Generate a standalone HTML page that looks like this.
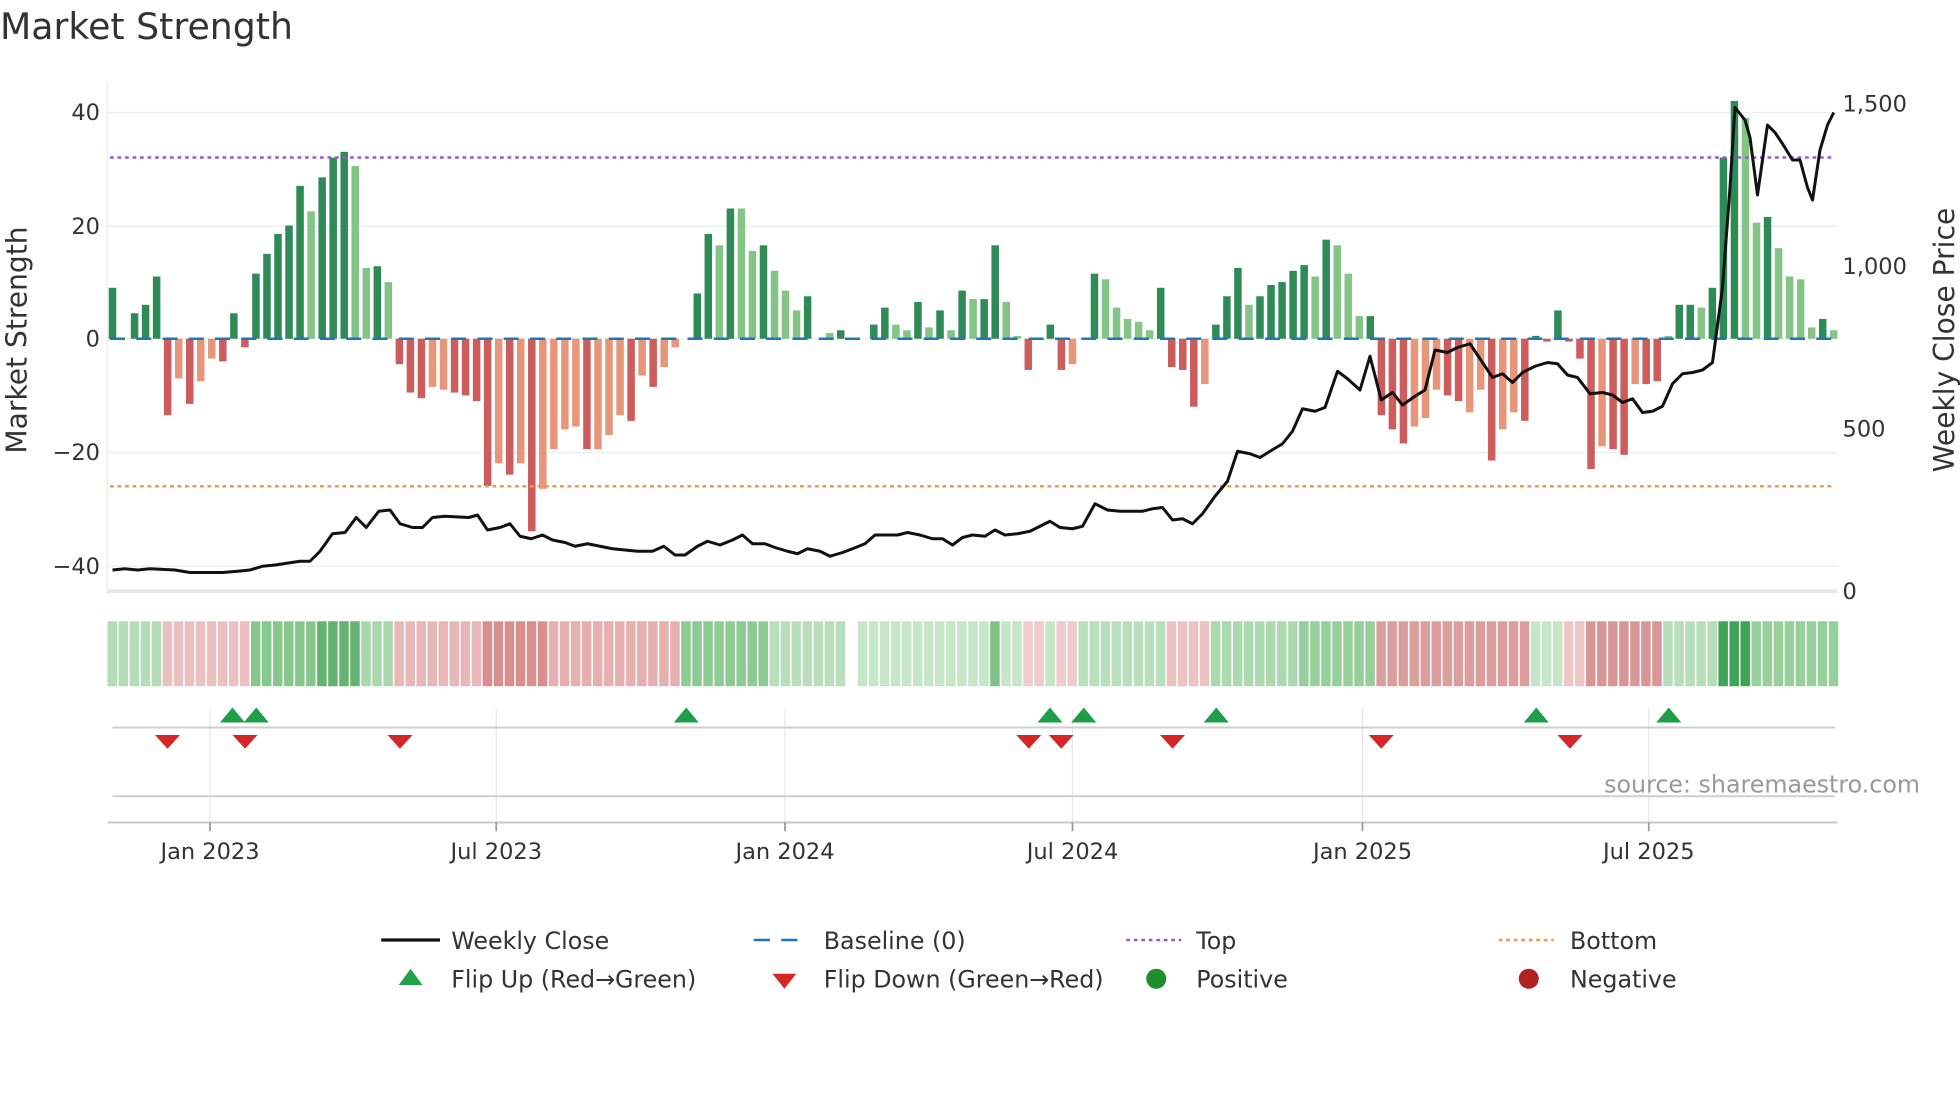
<!DOCTYPE html>
<html><head><meta charset="utf-8"><style>
html,body{margin:0;padding:0;background:#fff;}
svg{display:block;font-family:"DejaVu Sans","Liberation Sans",sans-serif;}
</style></head><body>
<svg id="s" width="1960" height="1102" viewBox="0 0 1568 881.6" xmlns="http://www.w3.org/2000/svg">
<text x="0" y="31" font-size="29" fill="#333">Market Strength</text>
<g id="grid" stroke="#ececf2" stroke-width="1">
<line x1="86" y1="90" x2="1470" y2="90"/><line x1="86" y1="181" x2="1470" y2="181"/><line x1="86" y1="271" x2="1470" y2="271"/><line x1="86" y1="362" x2="1470" y2="362"/><line x1="86" y1="453" x2="1470" y2="453"/>
<line x1="86" y1="65" x2="86" y2="476"/>
</g>
<line x1="86" y1="473" x2="1470" y2="473" stroke="#e6e6f0" stroke-width="3"/>
<g id="bars"></g>
<line x1="88" y1="271" x2="1468" y2="271" stroke="#1f77b4" stroke-width="2" stroke-dasharray="12,9"/>
<line x1="88" y1="126" x2="1468" y2="126" stroke="#9b59d0" stroke-width="2" stroke-dasharray="3,3"/>
<line x1="88" y1="389" x2="1468" y2="389" stroke="#ee9a4d" stroke-width="2" stroke-dasharray="3,3"/>
<polyline id="price" fill="none" stroke="#111" stroke-width="2.4" stroke-linejoin="round"/>
<g font-size="18" fill="#333" text-anchor="end">
<text x="80" y="96">40</text><text x="80" y="187">20</text><text x="80" y="277">0</text><text x="80" y="368">−20</text><text x="80" y="459">−40</text>
</g>
<g font-size="18" fill="#333">
<text x="1474" y="89">1,500</text><text x="1474" y="219">1,000</text><text x="1474" y="349">500</text><text x="1474" y="479">0</text>
</g>
<text transform="translate(21,272) rotate(-90)" font-size="22.5" fill="#333" text-anchor="middle">Market Strength</text>
<text transform="translate(1563,272) rotate(-90)" font-size="22.5" fill="#333" text-anchor="middle">Weekly Close Price</text>
<g id="heat"></g>
<g stroke="#e8e8e8" stroke-width="1">
<line x1="168" y1="567" x2="168" y2="658"/><line x1="397" y1="567" x2="397" y2="658"/><line x1="628" y1="567" x2="628" y2="658"/><line x1="858" y1="567" x2="858" y2="658"/><line x1="1090" y1="567" x2="1090" y2="658"/><line x1="1319" y1="567" x2="1319" y2="658"/>
</g>
<line x1="90" y1="582" x2="1468" y2="582" stroke="#cfcfcf" stroke-width="1.6"/>
<line x1="90" y1="637" x2="1468" y2="637" stroke="#cfcfcf" stroke-width="1.6"/>
<line x1="86" y1="658" x2="1470" y2="658" stroke="#c8c8c8" stroke-width="1.6"/>
<g stroke="#999" stroke-width="1.4">
<line x1="168" y1="658" x2="168" y2="665"/><line x1="397" y1="658" x2="397" y2="665"/><line x1="628" y1="658" x2="628" y2="665"/><line x1="858" y1="658" x2="858" y2="665"/><line x1="1090" y1="658" x2="1090" y2="665"/><line x1="1319" y1="658" x2="1319" y2="665"/>
</g>
<g id="flips"></g>
<text x="1536" y="634" font-size="19" fill="#999" text-anchor="end">source: sharemaestro.com</text>
<g font-size="18" fill="#333" text-anchor="middle">
<text x="168" y="687">Jan 2023</text><text x="397" y="687">Jul 2023</text><text x="628" y="687">Jan 2024</text><text x="858" y="687">Jul 2024</text><text x="1090" y="687">Jan 2025</text><text x="1319" y="687">Jul 2025</text>
</g>
<g font-size="19" fill="#333">
<line x1="305" y1="752" x2="352" y2="752" stroke="#111" stroke-width="2.6"/><text x="361" y="759">Weekly Close</text>
<line x1="603" y1="752" x2="647" y2="752" stroke="#1f77b4" stroke-width="2" stroke-dasharray="13,9"/><text x="659" y="759">Baseline (0)</text>
<line x1="901" y1="752" x2="945" y2="752" stroke="#9b59d0" stroke-width="2" stroke-dasharray="3,3"/><text x="957" y="759">Top</text>
<line x1="1199" y1="752" x2="1243" y2="752" stroke="#ee9a4d" stroke-width="2" stroke-dasharray="3,3"/><text x="1256" y="759">Bottom</text>
<polygon points="319,788 338,788 328.5,775" fill="#22a04a"/><text x="361" y="790">Flip Up (Red→Green)</text>
<polygon points="618,779 637,779 627.5,791" fill="#d62728"/><text x="659" y="790">Flip Down (Green→Red)</text>
<circle cx="925" cy="783" r="8" fill="#1f8f2e"/><text x="957" y="790">Positive</text>
<circle cx="1223" cy="783" r="8" fill="#b22222"/><text x="1256" y="790">Negative</text>
</g>
</svg>
<script>
var NS="http://www.w3.org/2000/svg";
var B=[[9,'d'],[0,'d'],[4.5,'d'],[6,'d'],[11,'d'],[-13.5,'r'],[-7,'o'],[-11.5,'r'],[-7.5,'o'],[-3.5,'o'],[-4,'r'],[4.5,'d'],[-1.5,'r'],[11.5,'d'],[15,'d'],[18.5,'d'],[20,'d'],[27,'d'],[22.5,'l'],[28.5,'d'],[32,'d'],[33,'d'],[30.5,'l'],[12.5,'l'],[12.8,'d'],[10,'l'],[-4.5,'r'],[-9.5,'r'],[-10.5,'r'],[-8.5,'o'],[-9,'o'],[-9.5,'r'],[-10,'r'],[-11,'r'],[-26,'r'],[-22,'o'],[-24,'r'],[-22,'o'],[-34,'r'],[-26.5,'o'],[-19.5,'o'],[-16,'o'],[-15.5,'o'],[-19.5,'r'],[-19.5,'o'],[-17,'o'],[-13.5,'o'],[-14.5,'r'],[-6.5,'o'],[-8.5,'r'],[-5,'o'],[-1.5,'o'],[0,'d'],[8,'d'],[18.5,'d'],[16.5,'l'],[23,'d'],[23,'l'],[15.5,'l'],[16.5,'d'],[12,'l'],[8.5,'l'],[5,'l'],[7.5,'d'],[0,'d'],[1,'l'],[1.5,'d'],[0,'d'],[0,'d'],[2.5,'d'],[5.5,'d'],[2.5,'l'],[1.5,'l'],[6.5,'d'],[2,'l'],[5,'d'],[1.5,'l'],[8.5,'d'],[7,'l'],[7,'d'],[16.5,'d'],[6.5,'l'],[0.5,'l'],[-5.5,'r'],[0,'d'],[2.5,'d'],[-5.5,'r'],[-4.5,'o'],[0,'d'],[11.5,'d'],[10.5,'l'],[5.5,'l'],[3.5,'l'],[3,'l'],[1.5,'l'],[9,'d'],[-5,'r'],[-5.5,'r'],[-12,'r'],[-8,'o'],[2.5,'d'],[7.5,'d'],[12.5,'d'],[6,'l'],[7.5,'d'],[9.5,'d'],[10,'d'],[12,'d'],[13,'d'],[11,'l'],[17.5,'d'],[16.5,'l'],[11.5,'l'],[4,'l'],[4,'d'],[-13.5,'r'],[-16,'r'],[-18.5,'r'],[-15.5,'o'],[-14,'o'],[-9,'o'],[-10,'r'],[-11,'r'],[-13,'o'],[-9,'o'],[-21.5,'r'],[-16,'o'],[-13,'o'],[-14.5,'r'],[0.5,'d'],[-0.5,'r'],[5,'d'],[-0.5,'r'],[-3.5,'r'],[-23,'r'],[-19,'o'],[-19.5,'r'],[-20.5,'r'],[-8,'o'],[-8,'r'],[-7.5,'r'],[0.5,'l'],[6,'d'],[6,'d'],[5.5,'l'],[9,'d'],[32,'d'],[42,'d'],[39,'l'],[20.5,'l'],[21.5,'d'],[16,'l'],[11,'l'],[10.5,'l'],[2,'l'],[3.5,'d'],[1.5,'l']];
var C={d:'#2e8a57',l:'#84c486',r:'#cd5c5c',o:'#e8967a'};
var g=document.getElementById('bars'),st=(1467-90)/(B.length-1);
B.forEach(function(b,i){var x=90+st*i-3,v=b[0];if(v===0)return;var y=271-(v>0?v:0)*4.53,h=Math.abs(v)*4.53;
var r=document.createElementNS(NS,'rect');r.setAttribute('x',x);r.setAttribute('y',y);r.setAttribute('width',6);r.setAttribute('height',h);r.setAttribute('fill',C[b[1]]);g.appendChild(r);});
var segs=[[86,130,'#b4dcb7'],[130,197,'#ebc0c0'],[197,201,'#c7e6c9'],[201,250,'#86c88c'],[250,290,'#62b46e'],[290,315,'#a8d8ab'],[315,387,'#e8b8b8'],[387,440,'#da8f8f'],[440,545,'#e6b0b0'],[545,620,'#8dcb92'],[620,677,'#b8dfba'],[686,792,'#c5e6c7'],[792,800,'#7fc486'],[800,815,'#c5e6c7'],[815,836,'#f0cccc'],[836,846,'#c5e6c7'],[846,862,'#f0cccc'],[862,932,'#b9e0bc'],[932,968,'#edc2c2'],[968,1040,'#aadaad'],[1040,1100,'#95cf99'],[1100,1225,'#dc9d9d'],[1225,1252,'#c5e6c7'],[1252,1268,'#efc6c6'],[1268,1330,'#d99696'],[1330,1376,'#b6deb9'],[1376,1400,'#3ea556'],[1400,1471,'#98d09c']];
var h=document.getElementById('heat');
for(var i=0;i<158;i++){var x=86+i*st,cx=x+4.4,col=null;segs.forEach(function(s){if(cx>=s[0]&&cx<s[1])col=s[2];});if(!col)continue;
var r=document.createElementNS(NS,'rect');r.setAttribute('x',x);r.setAttribute('y',497);r.setAttribute('width',Math.min(7.6,1471-x));r.setAttribute('height',52);r.setAttribute('fill',col);h.appendChild(r);}
var f=document.getElementById('flips');
[186,205,549,840,867,973,1229,1335].forEach(function(x){var p=document.createElementNS(NS,'polygon');p.setAttribute('points',(x-10)+',578 '+(x+10)+',578 '+x+',566');p.setAttribute('fill','#1f9e48');f.appendChild(p);});
[134,196,320,823,849,938,1105,1256].forEach(function(x){var p=document.createElementNS(NS,'polygon');p.setAttribute('points',(x-10)+',588 '+(x+10)+',588 '+x+',599');p.setAttribute('fill','#d62728');f.appendChild(p);});
document.getElementById('price').setAttribute('points',"90,456 100,455 110,456 120,455 140,456 152,458 178,458 190,457 200,456 210,453 220,452 240,449 248,449 256,441 266,427 276,426 285,414 293,422 303,409 312,408 320,419 330,422 338,422 346,414 356,413 375,414 382,412 390,424 400,422 408,419 416,429 425,431 434,428 442,432 452,434 460,437 470,435 480,437 490,439 500,440 510,441 522,441 531,437 540,444 548,444 558,437 566,433 576,436 586,432 594,428 602,435 612,435 620,438 630,441 638,443 646,439 656,441 664,445 674,442 682,439 692,435 700,428 710,428 718,428 726,426 736,428 746,431 754,431 762,436 770,430 778,428 788,429 796,424 804,428 814,427 824,425 832,421 840,417 848,422 858,423 866,421 876,403 886,408 896,409 906,409 914,409 922,407 930,406 938,416 946,415 954,419 962,411 972,397 982,385 990,361 1000,363 1008,366 1016,361 1026,355 1034,345 1042,327 1052,329 1060,326 1070,297 1078,303 1088,312 1096,285 1105,320 1114,314 1122,324 1132,317 1140,312 1148,280 1158,282 1166,278 1176,275 1186,290 1194,302 1202,299 1210,306 1218,298 1228,293 1238,290 1246,291 1254,300 1262,302 1272,315 1282,314 1290,316 1298,322 1306,319 1314,330 1322,329 1330,325 1338,307 1346,299 1354,298 1362,296 1370,290 1378,230 1384,150 1388,86 1396,96 1400,110 1406,156 1414,100 1420,106 1426,115 1434,128 1440,128 1446,150 1450,160 1456,120 1462,100 1467,90");
</script>
</body></html>
